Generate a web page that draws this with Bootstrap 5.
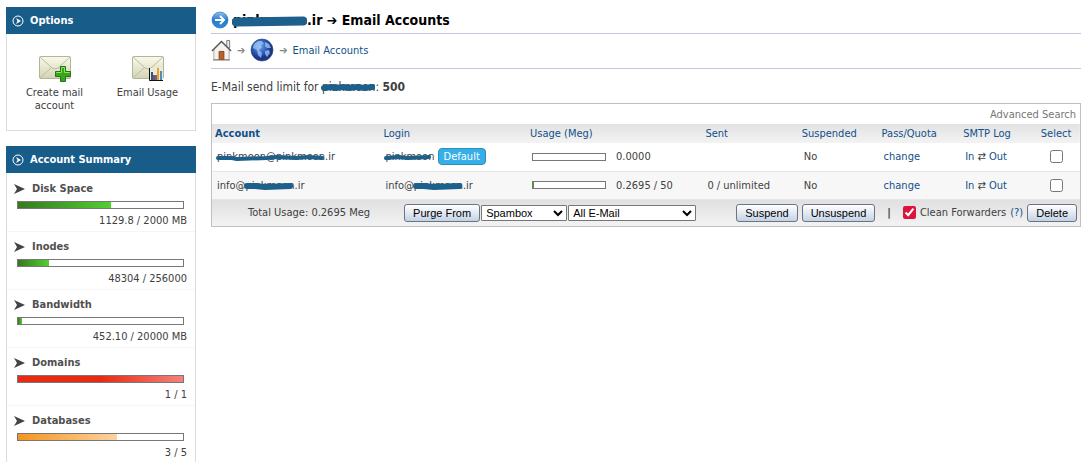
<!DOCTYPE html>
<html lang="en">
<head>
<meta charset="utf-8">
<meta name="viewport" content="width=device-width, initial-scale=1">
<title>Email Accounts</title>
<link rel="stylesheet" href="https://cdn.jsdelivr.net/npm/bootstrap@5.3.0/dist/css/bootstrap.min.css">
<style>
body{font:11px/13px Tahoma,"DejaVu Sans Condensed","DejaVu Sans",sans-serif;color:#404040;background:#fff}
a{color:#12508a;text-decoration:none}
.page{padding:7px 7px 0 6px;gap:15px}
.side{flex:0 0 190px}
.panel-head{background:#185c8a;color:#fff;font-size:11px;line-height:13px;font-weight:bold;margin:0;height:27px;padding-left:6px;gap:6px}
.panel-body{border:1px solid #dcdcdc;border-top:0}
.tools{padding:19px 0 0 1px;min-height:97px}
.tools a{width:93px;color:#404040;text-align:center;padding:0 8px}
.tools svg,.crumbs svg,.panel-head svg{display:block}
.tools svg{margin:0 auto 3px}
.summary{margin-top:15px}
.stats{padding-top:1px}
.stat{height:58px;padding:8px 8px 0 7px;border-bottom:1px solid #f6f6f6}
.stat:last-child{border:0}
.stat h3{font-size:11px;line-height:14px;font-weight:bold;margin:0 0 5px;gap:7px;color:#505050}
.meter{border:1px solid #777;height:8px;background:#fff}
.stat .meter{width:167px;margin:0 0 5px 3px}
.meter div{height:100%}
.fill-ok{background:linear-gradient(90deg,#35791f,#52d02f)}
.fill-full{background:linear-gradient(90deg,#e92a12 50%,#f4827c)}
.fill-warn{background:linear-gradient(90deg,#f7941d,#fbd3a0)}
.title-row{font-size:14px;line-height:17px;font-weight:bold;color:#000;margin:0;height:27px;gap:4px;border-bottom:1px solid #c6c5dd}
.title-row .hid{padding:0 4px 0 0}
.crumbs{height:35px;gap:5px;padding-bottom:2px;border-bottom:1px solid #c6c5dd;color:#888}
.limit{font-size:12px;line-height:14px;margin:11px 0 9px}
.hid{position:relative;display:inline-block}
.hid svg{position:absolute;left:-1px;top:0;width:calc(100% + 1px);height:100%}
.hid path{fill:none;stroke:#1c608b;stroke-linecap:round;stroke-linejoin:round}
.grid-box{border:1px solid #c0c0c0}
.adv{height:20px;padding-right:4px}
.adv a{color:#777}
.mail{table-layout:fixed;width:100%}
.mail th,.mail td{padding:0 0 0 5px;font-weight:normal}
.mail th{height:19px;padding-left:3px}
.mail thead{background:linear-gradient(#e2e2e2,#f3f3f3)}
.mail th.sorted{font-weight:bold}
.mail tbody td{height:28px;border-bottom:1px solid #e6e6e6}
.mail tbody tr:nth-child(2){background:#f7f7f7}
.mail .mid{text-align:center;padding:0}
.mail tfoot{background:linear-gradient(#dfdfdf,#f3f3f3)}
.mail tfoot td{height:27px;padding:0 3px 0 36px}
.usage{gap:10px}
.usage .meter{width:74px}
.tag{background:#35aeea;border:1px solid #2e8fb5;border-radius:4px;color:#fff;padding:0 5px;line-height:15px;display:inline-block}
.act{font:11px/14px "Liberation Sans",Arial,sans-serif;color:#000;height:18px;padding:0 8px;border:1px solid #6b7480;border-radius:3px;background:linear-gradient(#fff,#e2e9f2 50%,#c3d2e4)}
.purge{margin-left:34px;gap:1px}
.pick{font:11px/14px "Liberation Sans",Arial,sans-serif;color:#000;height:16px;border:1px solid #767676;border-radius:1px;background:#fff;padding:0}
.pick-a{width:86px}.pick-b{width:128px}
input[type=checkbox]{width:13px;height:13px;margin:0;display:block;accent-color:#dc143c}
.mail tbody input{margin:0 auto}
</style>
</head>
<body>
<div class="page d-flex align-items-start">
<aside class="side">
  <section>
    <h2 class="panel-head d-flex align-items-center"><svg width="12" height="12" viewBox="0 0 12 12"><circle cx="6" cy="6" r="5" fill="none" stroke="#fff"/><path d="M4 3l5 3-5 3 1.500-3z" fill="#fff"/></svg>Options</h2>
    <div class="panel-body tools d-flex">
      <a href="#"><svg width="34" height="30" viewBox="0 0 34 30"><use href="#mail"/><path d="M22.500 13.500h5v5h5v5h-5v5h-5v-5h-5v-5h5z" fill="#3aa51d" stroke="#1f7512"/><path d="M18.500 20v-.5h5v-5h3v5h5v.5" fill="none" stroke="#8be361"/></svg>Create mail account</a>
      <a href="#"><svg width="34" height="30" viewBox="0 0 34 30"><use href="#mail"/><path d="M18 15h14v13H18z" fill="#efeede" opacity=".8"/><path d="M18.500 15v12.500H32" fill="none" stroke="#111"/><path d="M20 19h2v8h-2z" fill="#28578b"/><path d="M22 22h2v5h-2z" fill="#8f4a55"/><path d="M24 22h2v5h-2z" fill="#4e6f9b"/><path d="M26 15h2v12h-2z" fill="#f19c25"/><path d="M29 18h2v9h-2z" fill="#4e8fb5"/></svg>Email Usage</a>
    </div>
  </section>
  <section class="summary">
    <h2 class="panel-head d-flex align-items-center"><svg width="12" height="12" viewBox="0 0 12 12"><circle cx="6" cy="6" r="5" fill="none" stroke="#fff"/><path d="M4 3l5 3-5 3 1.500-3z" fill="#fff"/></svg>Account Summary</h2>
    <div class="panel-body stats border-bottom-0">
      <div class="stat"><h3 class="d-flex align-items-center"><svg width="11" height="10" viewBox="0 0 11 10"><use href="#arrow"/></svg>Disk Space</h3><div class="meter"><div class="fill-ok" style="width:56.5%"></div></div><div class="text-end">1129.8 / 2000 MB</div></div>
      <div class="stat"><h3 class="d-flex align-items-center"><svg width="11" height="10" viewBox="0 0 11 10"><use href="#arrow"/></svg>Inodes</h3><div class="meter"><div class="fill-ok" style="width:18.9%"></div></div><div class="text-end">48304 / 256000</div></div>
      <div class="stat"><h3 class="d-flex align-items-center"><svg width="11" height="10" viewBox="0 0 11 10"><use href="#arrow"/></svg>Bandwidth</h3><div class="meter"><div class="fill-ok" style="width:2.3%"></div></div><div class="text-end">452.10 / 20000 MB</div></div>
      <div class="stat"><h3 class="d-flex align-items-center"><svg width="11" height="10" viewBox="0 0 11 10"><use href="#arrow"/></svg>Domains</h3><div class="meter"><div class="fill-full" style="width:100%"></div></div><div class="text-end">1 / 1</div></div>
      <div class="stat"><h3 class="d-flex align-items-center"><svg width="11" height="10" viewBox="0 0 11 10"><use href="#arrow"/></svg>Databases</h3><div class="meter"><div class="fill-warn" style="width:60%"></div></div><div class="text-end">3 / 5</div></div>
    </div>
  </section>
</aside>
<main class="flex-grow-1">
  <h1 class="title-row d-flex align-items-center"><svg width="18" height="18" viewBox="0 0 18 18"><circle cx="9" cy="9" r="8" fill="url(#ball)" stroke="#2467b4" stroke-width=".6"/><path d="M4 9h8M9 5l4 4-4 4" fill="none" stroke="#fff" stroke-width="2"/></svg><span><span class="hid">pinkmoon<svg viewBox="0 0 76 17" preserveAspectRatio="none"><path d="M4 10L72 9" stroke-width="9"/></svg></span>.ir ➔ Email Accounts</span></h1>
  <nav class="crumbs d-flex align-items-center">
    <a href="#" aria-label="Home"><svg width="21" height="24" viewBox="0 0 22 24"><path d="M16.500 2h3v8h-3z" fill="#eee" stroke="#777"/><path d="M3 11l8-8 8 8v11H3z" fill="#f5f3ef" stroke="#aaa"/><path d="M1 13L11 3 21 13" fill="none" stroke="#555" stroke-width="1.500"/><path d="M8.500 13.500h5V22h-5z" fill="#b9622a" stroke="#8b4416"/><path d="M2 22.500h18" stroke="#777"/></svg></a><span>➔</span>
    <a href="#" aria-label="Domain"><svg width="24" height="24" viewBox="0 0 24 24"><circle cx="12" cy="12" r="11" fill="url(#globe)" stroke="#27458e" stroke-width=".6"/><path d="M4 6l4-3 4 0 2 3-3 1 1 2-3 3 3 3-1 5-3-3-1-5-4-2zM15 4l4 2 2 4-4 0-2-2zM15 13l4-1 1 3-3 4-2-3z" fill="#a9cdf4" opacity=".7"/></svg></a><span>➔</span>
    <a href="#">Email Accounts</a>
  </nav>
  <p class="limit">E-Mail send limit for <span class="hid">pinkmoon<svg viewBox="0 0 54 14" preserveAspectRatio="none"><path d="M3 8l7-1 4 1 8-1 6 1 8-1 7 1 8-1" stroke-width="6"/></svg></span>: <b>500</b></p>
  <div class="grid-box">
    <div class="adv d-flex align-items-center justify-content-end"><a href="#">Advanced Search</a></div>
    <table class="mail">
      <colgroup><col style="width:19.4%"><col style="width:16.9%"><col style="width:20.2%"><col style="width:11.1%"><col style="width:9.2%"><col style="width:9.4%"><col style="width:8.3%"><col></colgroup>
      <thead><tr><th class="sorted"><a href="#">Account</a></th><th><a href="#">Login</a></th><th><a href="#">Usage (Meg)</a></th><th><a href="#">Sent</a></th><th><a href="#">Suspended</a></th><th><a href="#">Pass/Quota</a></th><th><a href="#">SMTP Log</a></th><th class="mid"><a href="#">Select</a></th></tr></thead>
      <tbody>
        <tr><td><span class="hid">pinkmoon@pinkmoon<svg viewBox="0 0 110 13" preserveAspectRatio="none"><path d="M2 8h14l5 1 30-1 10-1 20 1 12-1 14 1" stroke-width="4"/></svg></span>.ir</td><td><span class="hid">pinkmoon<svg viewBox="0 0 50 13" preserveAspectRatio="none"><path d="M2 8l12-1 10 1 21-1" stroke-width="4"/></svg></span> <span class="tag">Default</span></td><td><div class="usage d-flex align-items-center"><div class="meter"></div>0.0000</div></td><td></td><td>No</td><td><a href="#">change</a></td><td><a href="#">In</a> ⇄ <a href="#">Out</a></td><td class="mid"><input type="checkbox" aria-label="Select pinkmoon"></td></tr>
        <tr><td>info@<span class="hid">pinkmoon<svg viewBox="0 0 50 13" preserveAspectRatio="none"><path d="M3 7l8 0 10 1 25-1" stroke-width="6"/></svg></span>.ir</td><td>info@<span class="hid">pinkmoon<svg viewBox="0 0 50 13" preserveAspectRatio="none"><path d="M3 7l8 0 10 1 25-1" stroke-width="6"/></svg></span>.ir</td><td><div class="usage d-flex align-items-center"><div class="meter"><div class="fill-ok" style="width:1.4%"></div></div>0.2695 / 50</div></td><td>0 / unlimited</td><td>No</td><td><a href="#">change</a></td><td><a href="#">In</a> ⇄ <a href="#">Out</a></td><td class="mid"><input type="checkbox" aria-label="Select info"></td></tr>
      </tbody>
      <tfoot><tr><td colspan="8"><div class="d-flex align-items-center">
        <span>Total Usage: 0.2695 Meg</span>
        <div class="purge d-flex align-items-center me-auto"><button class="act" type="button">Purge From</button><select class="pick pick-a" aria-label="Folder"><option>Spambox</option></select><select class="pick pick-b" aria-label="Messages"><option>All E-Mail</option></select></div>
        <div class="d-flex align-items-center gap-1"><button class="act" type="button">Suspend</button><button class="act" type="button">Unsuspend</button><b class="mx-2">|</b><input type="checkbox" id="fw" checked><label for="fw">Clean Forwarders</label><a href="#">(?)</a><button class="act" type="button">Delete</button></div>
      </div></td></tr></tfoot>
    </table>
  </div>
</main>
</div>
<svg width="0" height="0" class="position-absolute" aria-hidden="true"><defs>
<linearGradient id="env" x2="0" y2="1"><stop stop-color="#fafaec"/><stop offset="1" stop-color="#d2d3b4"/></linearGradient>
<linearGradient id="ball" x2="0" y2="1"><stop stop-color="#8cc5ef"/><stop offset=".5" stop-color="#2978c8"/><stop offset="1" stop-color="#2c8fde"/></linearGradient>
<radialGradient id="globe" cx=".4" cy=".35"><stop stop-color="#6da3e8"/><stop offset=".6" stop-color="#2f62c0"/><stop offset="1" stop-color="#1d3684"/></radialGradient>
<g id="mail"><rect x="1.500" y="3.500" width="31" height="22" rx="1" fill="url(#env)" stroke="#b5b49b"/><path d="M2 25l11-10M32 25L21 15M2 4l12 11q3 2 6 0L32 4" fill="none" stroke="#bdbca0"/></g>
<path id="arrow" d="M0 0l11 5-11 5 3-5z" fill="#444"/>
</defs></svg>
<script src="https://cdn.jsdelivr.net/npm/bootstrap@5.3.0/dist/js/bootstrap.bundle.min.js"></script>
</body>
</html>
